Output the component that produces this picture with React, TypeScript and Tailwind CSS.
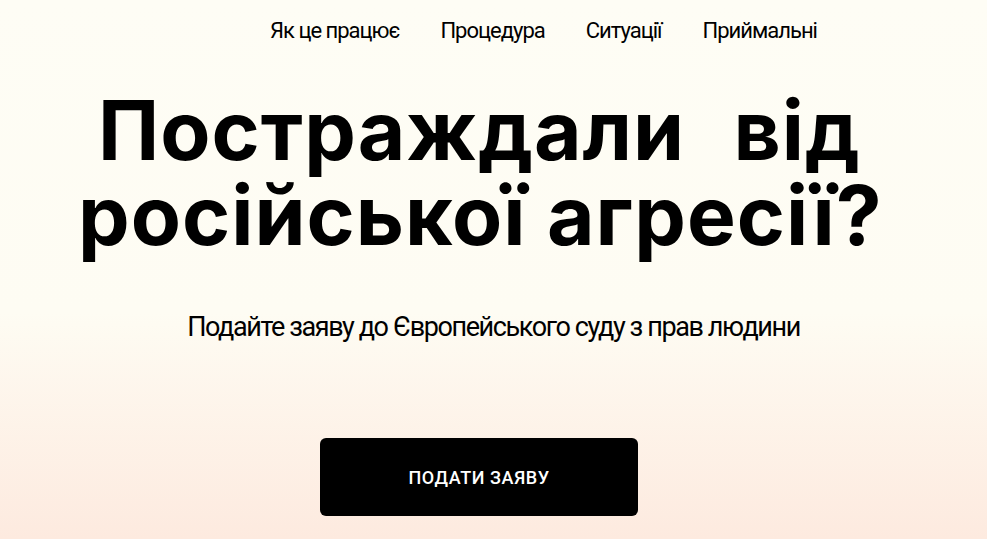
export default function App() {
  const navItems = ["Як це працює", "Процедура", "Ситуації", "Приймальні"]

  return (
    <div className="min-h-[539px] w-full bg-[linear-gradient(to_bottom,#fefdf5_0%,#fefcf3_58%,#fdeadf_100%)] text-black overflow-hidden">
      <nav className="flex justify-center gap-[41px] pt-[17px] pl-[100px] font-['Roboto',sans-serif] text-[22px] leading-[28px] tracking-[-1px]">
        {navItems.map((item) => (
          <a key={item} href="#" className="text-black">{item}</a>
        ))}
      </nav>

      <h1 className="mt-[43px] pl-[78px] font-['Inter',sans-serif] font-bold text-[82px] leading-[85px] tracking-[1px]">
        <span className="block pl-[20px] [word-spacing:28px]">Постраждали від</span>
        <span className="block">російської агресії?</span>
      </h1>

      <p className="mt-[51px] text-center font-['Roboto',sans-serif] text-[27px] leading-[36px] tracking-[-1.4px]">
        Подайте заяву до Європейського суду з прав людини
      </p>

      <div className="mt-[93px] flex justify-center">
        <button className="w-[318px] h-[78px] ml-[-29px] rounded-[6px] bg-black text-white font-['Roboto',sans-serif] font-medium text-[18px] tracking-[0.6px]">
          ПОДАТИ ЗАЯВУ
        </button>
      </div>
    </div>
  )
}
